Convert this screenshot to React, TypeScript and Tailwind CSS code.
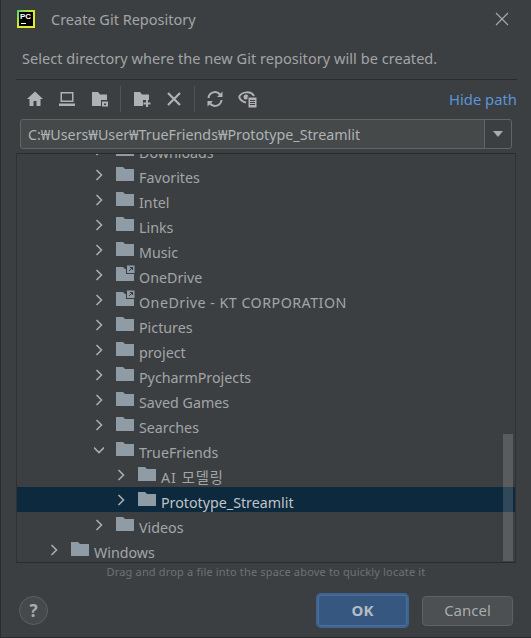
import type { ReactNode } from "react";

interface Row {
  name: string;
  indent: string;
  open?: boolean;
  link?: boolean;
  selected?: boolean;
  spacing?: string;
}

const rows: Row[] = [
  { name: "Downloads", indent: "pl-[77px]" },
  { name: "Favorites", indent: "pl-[77px]" },
  { name: "Intel", indent: "pl-[77px]" },
  { name: "Links", indent: "pl-[77px]" },
  { name: "Music", indent: "pl-[77px]" },
  { name: "OneDrive", indent: "pl-[77px]", link: true },
  { name: "OneDrive - KT CORPORATION", indent: "pl-[77px]", link: true, spacing: "tracking-[0.48px]" },
  { name: "Pictures", indent: "pl-[77px]" },
  { name: "project", indent: "pl-[77px]" },
  { name: "PycharmProjects", indent: "pl-[77px]" },
  { name: "Saved Games", indent: "pl-[77px]" },
  { name: "Searches", indent: "pl-[77px]" },
  { name: "TrueFriends", indent: "pl-[77px]", open: true },
  { name: "AI 모델링", indent: "pl-[99px]", spacing: "tracking-[1px]" },
  { name: "Prototype_Streamlit", indent: "pl-[99px]", selected: true },
  { name: "Videos", indent: "pl-[77px]" },
  { name: "Windows", indent: "pl-[32px]" },
];

const Chevron = ({ open }: { open?: boolean }) => (
  <svg width="10" height="12" viewBox="0 0 10 12" className="shrink-0" fill="none" stroke="#a9adb0" strokeWidth="1.6">
    {open ? <path d="M0 3.5 L5 8.5 L10 3.5" /> : <path d="M2.5 1 L7.5 6 L2.5 11" />}
  </svg>
);

const Folder = ({ link }: { link?: boolean }) => (
  <svg width="20" height="18" viewBox="0 0 20 18" className="block shrink-0 -mt-[1px]">
    <path d="M1 2 H8 L10 4 H19 V16 H1 Z" fill="#8f9ca6" />
    {link && (
      <g>
        <rect x="11" y="0" width="9" height="9" fill="#3c3f41" />
        <rect x="12" y="0.5" width="7.5" height="7.5" fill="#8f9ca6" />
        <path d="M14 6 L17.5 2.5 M15 2.5 H17.5 V5" stroke="#2b2d2f" strokeWidth="0.9" fill="none" />
      </g>
    )}
  </svg>
);

const ToolIcon = ({ children, className }: { children: ReactNode; className: string }) => (
  <svg width="18" height="18" viewBox="0 0 18 18" className={className} fill="#afb1b3">
    {children}
  </svg>
);

const Toolbar = () => (
  <div className="flex items-center h-[22px]">
    <ToolIcon className="ml-[25px]">
      <path d="M9 1.5 L17 9 H14.5 V16 H10.5 V11 H7.5 V16 H3.5 V9 H1 Z" />
    </ToolIcon>
    <ToolIcon className="ml-[14px]">
      <path d="M2.5 2 H15.5 V12 H2.5 Z M4 3.5 V10.5 H14 V3.5 Z" fillRule="evenodd" />
      <rect x="1" y="13.5" width="16" height="2.5" />
    </ToolIcon>
    <ToolIcon className="ml-[15px]">
      <path d="M1 2 H7 L9 4.5 H16 V10 H10 V16 H1 Z" />
      <rect x="11" y="11.5" width="6" height="5" />
      <rect x="13" y="13.5" width="2" height="1.5" fill="#3c3f41" />
    </ToolIcon>
    <div className="w-px h-[26px] bg-[#515355] ml-[11px]" />
    <ToolIcon className="ml-[12px]">
      <path d="M1 2 H7 L9 4.5 H16 V10 H10 V16 H1 Z" />
      <path d="M13 10 H15 V12.5 H17.5 V14.5 H15 V17 H13 V14.5 H10.5 V12.5 H13 Z" />
    </ToolIcon>
    <svg width="18" height="18" viewBox="0 0 18 18" className="ml-[14px]" stroke="#afb1b3" strokeWidth="2.2" fill="none">
      <path d="M3 3 L15 15 M15 3 L3 15" />
    </svg>
    <div className="w-px h-[26px] bg-[#515355] ml-[11px]" />
    <svg width="18" height="18" viewBox="0 0 18 18" className="ml-[11px]" fill="none" stroke="#afb1b3" strokeWidth="2">
      <path d="M2.5 8 A6.5 6.5 0 0 1 14 4.5" />
      <path d="M15.5 10 A6.5 6.5 0 0 1 4 13.5" />
      <path d="M16.5 1.5 V7 H11 Z M1.5 16.5 V11 H7 Z" fill="#afb1b3" stroke="none" />
    </svg>
    <svg width="20" height="20" viewBox="0 0 20 20" className="ml-[14px]" fill="none">
      <path d="M1 8 C4 2 13 2 16 7" stroke="#afb1b3" strokeWidth="2" />
      <path d="M1 8 C2.5 11 5 13 8 13.5" stroke="#afb1b3" strokeWidth="2" />
      <circle cx="8" cy="8" r="2.5" fill="#afb1b3" />
      <rect x="10" y="8" width="9" height="11" fill="#afb1b3" stroke="#3c3f41" />
      <path d="M12 11.5 H17 M12 13.5 H17 M12 15.5 H17" stroke="#3c3f41" />
    </svg>
    <a className="ml-auto text-[14.8px] leading-none text-[#5a94d8] mr-[14px]">Hide path</a>
  </div>
);

const TreeRow = ({ row }: { row: Row }) => (
  <div className={`relative flex items-center h-[25px] shrink-0 ${row.indent} ${row.selected ? "bg-[#0d293e]" : ""}`}>
    <Chevron open={row.open} />
    <div className="ml-[11px]">
      <Folder link={row.link} />
    </div>
    <span className={`ml-[4px] pt-[8px] text-[14.25px] leading-none whitespace-nowrap ${row.spacing ?? ""} ${row.selected ? "text-[#c0c4c7]" : "text-[#a2a6a9]"}`}>
      {row.name}
    </span>
  </div>
);

export default function App() {
  return (
    <div
      className="w-[531px] h-[638px] overflow-hidden bg-[#3c3f41] border-l border-b border-[#2b2b2b] flex flex-col text-[#a9acae]"
      style={{ fontFamily: '"Noto Sans", "Noto Sans CJK KR", sans-serif' }}
    >
      {/* Titlebar */}
      <div className="flex items-center h-[38px] shrink-0">
        <div className="ml-[16px] w-[18px] h-[18px] p-[2px] bg-gradient-to-br from-[#3fd45a] via-[#d8ea2c] to-[#e6ee2e]">
          <div className="w-full h-full bg-black text-white text-[8px] font-bold leading-[9px] pl-[1px] relative" style={{ fontFamily: '"Liberation Sans", sans-serif' }}>
            PC
            <div className="absolute left-[2px] bottom-[2px] w-[5px] h-[1px] bg-white" />
          </div>
        </div>
        <span className="ml-[16px] text-[14.5px] text-[#a2a5a8] leading-none">Create Git Repository</span>
        <svg width="14" height="14" viewBox="0 0 14 14" className="ml-auto mr-[22px]" stroke="#a9acae" strokeWidth="1.1" fill="none">
          <path d="M1 1 L13 13 M13 1 L1 13" />
        </svg>
      </div>

      <p className="ml-[21px] mt-[10px] text-[14.5px] leading-[20px] text-[#a2a5a8] tracking-[0.05px]">
        Select directory where the new Git repository will be created.
      </p>

      <div className="ml-[15px] mr-[14px] mt-[11px] h-px bg-[#2b2b2b] shrink-0" />

      <div className="mt-[8px]">
        <Toolbar />
      </div>

      {/* Path field */}
      <div className="ml-[19px] mr-[19px] mt-[9px] h-[30px] shrink-0 flex border border-[#646464] rounded-[3px] bg-[#45494a]">
        <span className="flex-1 pl-[7px] text-[14.25px] leading-[29px] text-[#b0b3b5] whitespace-nowrap">
          C:₩Users₩User₩TrueFriends₩Prototype_Streamlit
        </span>
        <div className="w-[27px] flex items-center justify-center border-l border-[#646464] bg-[#3c3f41] rounded-r-[3px]">
          <div className="w-0 h-0 border-l-[5.5px] border-r-[5.5px] border-t-[6px] border-l-transparent border-r-transparent border-t-[#a9acae]" />
        </div>
      </div>

      {/* Tree */}
      <div className="relative ml-[15px] mr-[15px] mt-[4px] h-[410px] shrink-0 overflow-hidden border border-[#2f3133] border-t-[#2b2b2b] border-b-[#2b2b2b] flex flex-col">
        <div className="-mt-[17px] flex flex-col">
          {rows.map((row) => (
            <TreeRow key={row.name} row={row} />
          ))}
        </div>
        <div className="absolute right-[2px] top-[280px] bottom-[1px] w-[10px] bg-white/15" />
      </div>

      <p className="text-center text-[11px] leading-[14px] mt-[2px] text-[#6f7274] tracking-[0.17px]">
        Drag and drop a file into the space above to quickly locate it
      </p>

      {/* Footer */}
      <div className="flex items-center mt-[14px]">
        <div className="ml-[18px] w-[29px] h-[29px] rounded-full border border-[#5e6163] bg-[#46494b] flex items-center justify-center text-[17px] font-bold text-[#a9acae]">
          ?
        </div>
        <button className="ml-auto w-[93px] h-[35px] rounded-[5px] border-[2px] border-[#3f6491] bg-[#365880] text-[15px] font-bold text-[#b6bcc3] outline outline-1 -outline-offset-[3px] outline-[#4a6f9b]">
          OK
        </button>
        <button className="ml-[13px] mr-[18px] w-[91px] h-[30px] rounded-[4px] border border-[#5e6163] bg-[#4c5052] text-[15px] text-[#a9acae]">
          Cancel
        </button>
      </div>
    </div>
  );
}
